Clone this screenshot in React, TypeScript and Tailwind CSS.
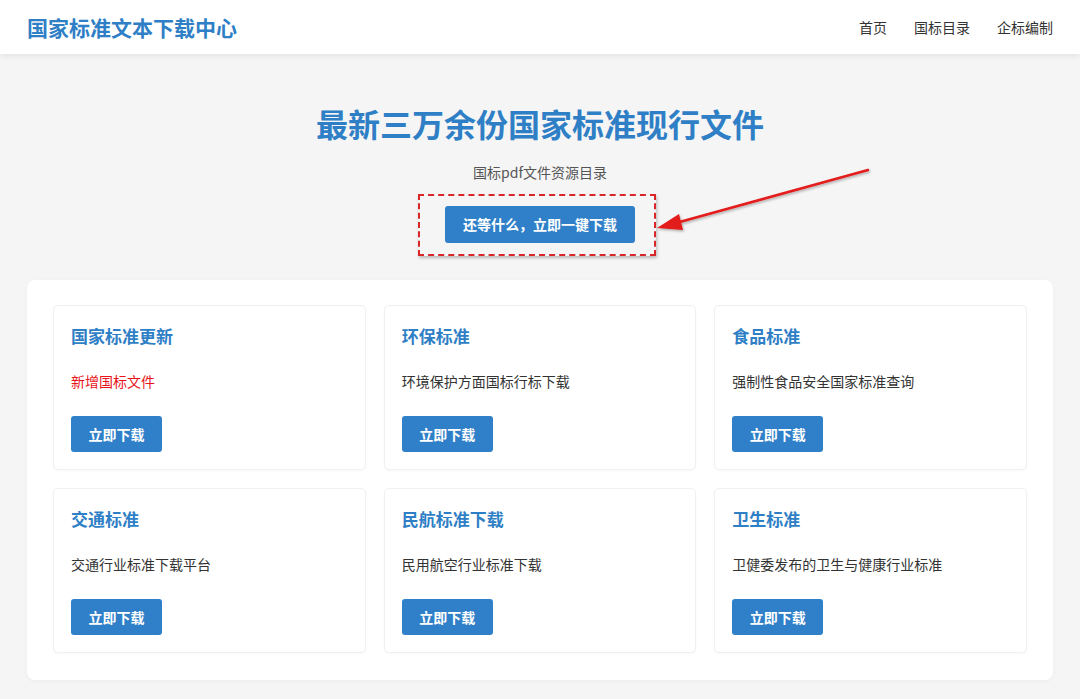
import React from "react";

const cards = [
  { t: "国家标准更新", d: "新增国标文件", red: true },
  { t: "环保标准", d: "环境保护方面国标行标下载" },
  { t: "食品标准", d: "强制性食品安全国家标准查询" },
  { t: "交通标准", d: "交通行业标准下载平台" },
  { t: "民航标准下载", d: "民用航空行业标准下载" },
  { t: "卫生标准", d: "卫健委发布的卫生与健康行业标准" },
];

export default function App() {
  return (
    <div
      className="relative min-h-[699px] w-full bg-[#f5f5f5] text-[#333]"
      style={{ fontFamily: '"Noto Sans CJK SC", "Noto Sans", sans-serif' }}
    >
      <header className="flex h-[54px] items-center justify-between bg-white px-[27px] shadow-[0_2px_6px_rgba(0,0,0,0.08)]">
        <div className="text-[21px] font-bold leading-none text-[#2f7fc6]">国家标准文本下载中心</div>
        <nav className="flex gap-[27px] text-[14px] text-[#333]">
          <span>首页</span>
          <span>国标目录</span>
          <span>企标编制</span>
        </nav>
      </header>

      <section className="flex flex-col items-center pt-[47px]">
        <h1 className="text-[32px] font-bold leading-[44px] text-[#2f7fc6]">最新三万余份国家标准现行文件</h1>
        <p className="mt-[17px] text-[14px] leading-[20px] text-[#555]">国标pdf文件资源目录</p>
        <div className="mt-[12px] mr-[6px] border-2 border-dashed border-[#d9262b] pt-[10px] pb-[11px] pl-[25px] pr-[19px] shadow-[1px_2px_3px_rgba(0,0,0,0.25)]">
          <button className="flex h-[37px] w-[190px] items-center justify-center rounded-[3px] bg-[#2f80c8] text-[14px] font-bold text-white">
            还等什么，立即一键下载
          </button>
        </div>
      </section>

      <svg className="absolute left-0 top-0" width="1080" height="699" style={{ pointerEvents: "none" }}>
        <defs>
          <filter id="sh" x="-10%" y="-50%" width="120%" height="200%">
            <feDropShadow dx="1" dy="1.5" stdDeviation="1" floodColor="#000" floodOpacity="0.3" />
          </filter>
        </defs>
        <g filter="url(#sh)">
          <line x1="868" y1="170" x2="676" y2="223" stroke="#e31b1b" strokeWidth="2.5" strokeLinecap="round" />
          <polygon points="657,228 679,214 683,230" fill="#e31b1b" />
        </g>
      </svg>

      <main className="mx-[27px] mt-[24px] rounded-[8px] bg-white px-[26px] pt-[25px] pb-[27px] shadow-[0_1px_4px_rgba(0,0,0,0.04)]">
        <div className="grid grid-cols-3 gap-x-[18px] gap-y-[18px]">
          {cards.map((c) => (
            <div
              key={c.t}
              className="h-[165px] rounded-[5px] border border-[#f0f0f0] bg-white px-[17px] pt-[18px] shadow-[0_1px_3px_rgba(0,0,0,0.03)]"
            >
              <h3 className="text-[17px] font-bold leading-[24px] text-[#2f7fc6]">{c.t}</h3>
              <p className={`mt-[23px] text-[14px] leading-[20px] ${c.red ? "text-[#e8141c]" : "text-[#333]"}`}>{c.d}</p>
              <button className="mt-[25px] flex h-[36px] w-[91px] items-center justify-center rounded-[3px] bg-[#2f80c8] text-[14px] font-bold text-white">
                立即下载
              </button>
            </div>
          ))}
        </div>
      </main>
    </div>
  );
}
